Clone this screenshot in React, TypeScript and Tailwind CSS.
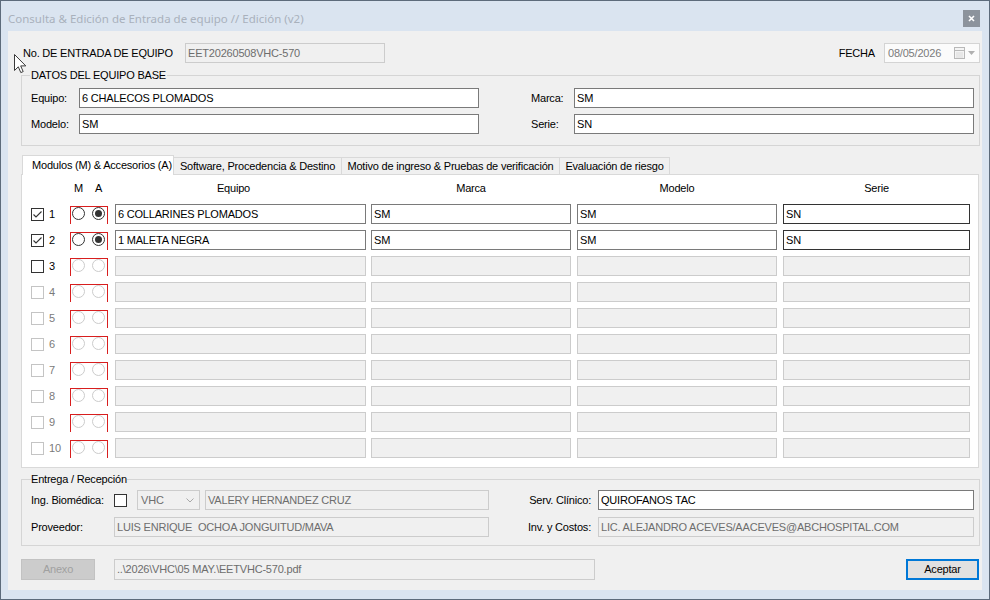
import React from "react";

type St = "on" | "dark" | "off";

function TB({ w, value = "", st = "on", h = 20, cls = "" }: { w: number; value?: string; st?: St; h?: number; cls?: string }) {
  const c =
    st === "on"
      ? "bg-white border-[#7a7a7a] text-black"
      : st === "dark"
      ? "bg-white border-[#333333] text-black"
      : "bg-[#f0f0f0] border-[#cccccc] text-[#6d6d6d]";
  return (
    <div
      className={`shrink-0 border ${c} pl-[2px] text-[11px] whitespace-pre overflow-hidden flex items-center ${cls}`}
      style={{ width: w, height: h }}
    >
      {value}
    </div>
  );
}

function CB({ checked = false, enabled = true }: { checked?: boolean; enabled?: boolean }) {
  return (
    <div
      className={`shrink-0 w-[13px] h-[13px] border bg-white flex items-center justify-center ${
        enabled ? "border-[#333333]" : "border-[#c4c4c4]"
      }`}
    >
      {checked && (
        <svg width="11" height="11" viewBox="0 0 11 11">
          <path d="M1.5 5.5 L4 8 L9.5 2.5" fill="none" stroke="#333333" strokeWidth="1.1" />
        </svg>
      )}
    </div>
  );
}

function Radio({ checked = false, enabled = true }: { checked?: boolean; enabled?: boolean }) {
  return (
    <div
      className={`shrink-0 w-[13px] h-[13px] rounded-full border bg-white flex items-center justify-center ${
        enabled ? "border-[#333333]" : "border-[#cccccc]"
      }`}
    >
      {checked && <div className="w-[7px] h-[7px] rounded-full bg-[#333333]" />}
    </div>
  );
}

function Row({ n, data }: { n: number; data?: [string, string, string, string] }) {
  const active = !!data;
  const cbEnabled = n <= 3;
  return (
    <div className="flex items-center h-[20px]">
      <CB checked={active} enabled={cbEnabled} />
      <div className={`ml-[5px] w-[21px] text-[11px] ${cbEnabled ? "text-black" : "text-[#7a7a7a]"}`}>{n}</div>
      <div className="w-[38px] h-[20px] flex flex-col">
        <div className="mt-[2px] h-[18px] border-t border-l border-r border-[#d81e1e] flex pl-[1px] gap-[7px]">
          <Radio enabled={active} />
          <Radio enabled={active} checked={active} />
        </div>
      </div>
      <div className="ml-[7px] flex">
        <TB w={251} value={data ? data[0] : ""} st={active ? "on" : "off"} />
        <TB w={200} cls="ml-[5px]" value={data ? data[1] : ""} st={active ? "on" : "off"} />
        <TB w={200} cls="ml-[6px]" value={data ? data[2] : ""} st={active ? "on" : "off"} />
        <TB w={187} cls="ml-[6px]" value={data ? data[3] : ""} st={active ? "dark" : "off"} />
      </div>
    </div>
  );
}

export default function App() {
  const rows: Record<number, [string, string, string, string]> = {
    1: ["6 COLLARINES PLOMADOS", "SM", "SM", "SN"],
    2: ["1 MALETA NEGRA", "SM", "SM", "SN"],
  };
  return (
    <div className="w-[990px] h-[600px] bg-[#dae4f0] border border-[#5d6b7b] flex flex-col relative font-['Liberation_Sans',Arial,sans-serif] text-black overflow-hidden">
      {/* Title bar */}
      <div className="h-[30px] shrink-0 flex items-start pl-[7px] pr-[9px] pt-[9px]">
        <div className="font-['Noto_Sans',sans-serif] text-[11.5px] leading-[18px] text-[#a9b1bc]">
          Consulta &amp; Edición de Entrada de equipo // Edición (v2)
        </div>
        <div className="ml-auto w-[17px] h-[17px] bg-[#8c939c] flex items-center justify-center">
          <svg width="7" height="7" viewBox="0 0 7 7">
            <path d="M1 1 L6 6 M6 1 L1 6" stroke="#ffffff" strokeWidth="1.6" />
          </svg>
        </div>
      </div>

      {/* Client */}
      <div className="mx-[7px] h-[559px] bg-[#f0f0f0] flex flex-col pl-[13px] pr-[2px] pt-[12px] text-[11px] tracking-[-0.2px]">
        {/* Row A */}
        <div className="flex items-center h-[20px]">
          <div className="ml-[2px] w-[162px]">No. DE ENTRADA DE EQUIPO</div>
          <TB w={200} value="EET20260508VHC-570" st="off" />
          <div className="ml-auto mr-[9px]">FECHA</div>
          <div className="w-[96px] h-[20px] border border-[#d4d4d4] bg-[#fbfbfb] flex items-center pl-[3px] text-[#7a7a7a]">
            <span>08/05/2026</span>
            <div className="ml-auto mr-[4px] flex items-center gap-[3px]">
              <svg width="11" height="12" viewBox="0 0 11 12">
                <rect x="0.5" y="0.5" width="10" height="11" fill="#f4f4f4" stroke="#b8b8b8" />
                <path d="M0.5 3.5 H10.5" stroke="#b8b8b8" />
                <path d="M2 6 H9 M2 8 H9 M2 10 H9" stroke="#dadada" />
              </svg>
              <svg width="7" height="4" viewBox="0 0 7 4">
                <path d="M0 0 L3.5 4 L7 0 Z" fill="#b0b0b0" />
              </svg>
            </div>
          </div>
        </div>

        {/* DATOS DEL EQUIPO BASE */}
        <fieldset className="mt-[6px] w-[959px] border border-[#d5d5d5] pl-[8px] pr-[5px] pt-[6px] pb-[11px]">
          <legend className="px-[1px] leading-[13px] text-[11px]">DATOS DEL EQUIPO BASE</legend>
          <div className="flex flex-col gap-[6px]">
            <div className="flex items-center">
              <div className="w-[49px] pl-[1px]">Equipo:</div>
              <TB w={400} value="6 CHALECOS PLOMADOS" />
              <div className="w-[95px] pl-[52px]">Marca:</div>
              <TB w={400} value="SM" />
            </div>
            <div className="flex items-center">
              <div className="w-[49px] pl-[1px]">Modelo:</div>
              <TB w={400} value="SM" />
              <div className="w-[95px] pl-[52px]">Serie:</div>
              <TB w={400} value="SN" />
            </div>
          </div>
        </fieldset>

        {/* Tabs */}
        <div className="mt-[9px] flex flex-col w-[958px]">
          <div className="flex items-end h-[19px] pl-[1px] relative z-10">
            <div className="h-[20px] mb-[-1px] w-[152px] bg-white border border-b-0 border-[#d9d9d9] pl-[9px] flex items-center whitespace-nowrap">
              Modulos (M) &amp; Accesorios (A)
            </div>
            <div className="h-[17px] w-[168px] bg-[#f0f0f0] border border-b-0 border-l-0 border-[#d9d9d9] flex items-center justify-center whitespace-nowrap">
              Software, Procedencia &amp; Destino
            </div>
            <div className="h-[17px] w-[218px] bg-[#f0f0f0] border border-b-0 border-l-0 border-[#d9d9d9] flex items-center justify-center whitespace-nowrap">
              Motivo de ingreso &amp; Pruebas de verificación
            </div>
            <div className="h-[17px] w-[110px] bg-[#f0f0f0] border border-b-0 border-l-0 border-[#d9d9d9] flex items-center justify-center whitespace-nowrap">
              Evaluación de riesgo
            </div>
          </div>
          <div className="bg-white border border-[#d9d9d9] pl-[9px] pt-[6px] pb-[9px]">
            <div className="flex h-[14px] leading-[14px] items-center">
              <div className="w-[39px]" />
              <div className="w-[13px] ml-[2px] text-center">M</div>
              <div className="w-[13px] ml-[7px] text-center">A</div>
              <div className="w-[3px]" />
              <div className="ml-[7px] w-[251px] pr-[14px] text-center">Equipo</div>
              <div className="ml-[5px] w-[200px] text-center">Marca</div>
              <div className="ml-[6px] w-[200px] text-center">Modelo</div>
              <div className="ml-[6px] w-[187px] text-center">Serie</div>
            </div>
            <div className="mt-[9px] flex flex-col gap-[6px]">
              {[1, 2, 3, 4, 5, 6, 7, 8, 9, 10].map((n) => (
                <Row key={n} n={n} data={rows[n]} />
              ))}
            </div>
          </div>
        </div>

        {/* Entrega / Recepción */}
        <fieldset className="mt-[5px] w-[959px] border border-[#d5d5d5] pl-[9px] pr-[5px] pt-[4px] pb-[8px]">
          <legend className="leading-[13px] text-[11px]">Entrega / Recepción</legend>
          <div className="flex flex-col gap-[7px]">
            <div className="flex items-center h-[20px]">
              <div className="w-[83px]">Ing. Biomédica:</div>
              <div className="w-[375px] flex items-center">
                <CB />
                <div className="ml-[10px] w-[63px] h-[20px] border border-[#cccccc] bg-[#f0f0f0] text-[#6d6d6d] flex items-center pl-[3px]">
                  <span>VHC</span>
                  <svg className="ml-auto mr-[5px]" width="8" height="5" viewBox="0 0 8 5">
                    <path d="M0.5 0.5 L4 4 L7.5 0.5" fill="none" stroke="#a8a8a8" />
                  </svg>
                </div>
                <TB w={284} cls="ml-[5px]" value="VALERY HERNANDEZ CRUZ" st="off" />
              </div>
              <div className="w-[104px] text-right pr-[2px]">Serv. Clínico:</div>
              <TB w={376} cls="ml-[5px]" value="QUIROFANOS TAC" />
            </div>
            <div className="flex items-center h-[20px]">
              <div className="w-[83px]">Proveedor:</div>
              <TB w={375} value="LUIS ENRIQUE  OCHOA JONGUITUD/MAVA" st="off" />
              <div className="w-[104px] text-right pr-[2px]">Inv. y Costos:</div>
              <TB w={376} cls="ml-[5px]" value="LIC. ALEJANDRO ACEVES/AACEVES@ABCHOSPITAL.COM" st="off" />
            </div>
          </div>
        </fieldset>

        {/* Bottom bar */}
        <div className="mt-[13px] flex items-center h-[21px]">
          <div className="w-[74px] h-[21px] bg-[#cccccc] border border-[#c2c2c2] text-[#a0a0a0] flex items-center justify-center">
            Anexo
          </div>
          <TB w={481} h={21} cls="ml-[19px]" value="..\2026\VHC\05 MAY.\EETVHC-570.pdf" st="off" />
          <div className="ml-auto mr-[1px] w-[73px] h-[21px] bg-[#e1e1e1] border-2 border-[#0078d7] flex items-center justify-center">
            Aceptar
          </div>
        </div>
      </div>

      {/* Mouse cursor */}
      <svg className="absolute left-[13px] top-[53px]" width="13" height="20" viewBox="0 0 13 20">
        <path d="M0.5 0.5 L0.5 16.5 L4.3 12.8 L6.8 18.6 L9.2 17.6 L6.7 11.9 L11.8 11.9 Z" fill="#ffffff" stroke="#3a3a3a" strokeWidth="1" />
      </svg>
    </div>
  );
}
